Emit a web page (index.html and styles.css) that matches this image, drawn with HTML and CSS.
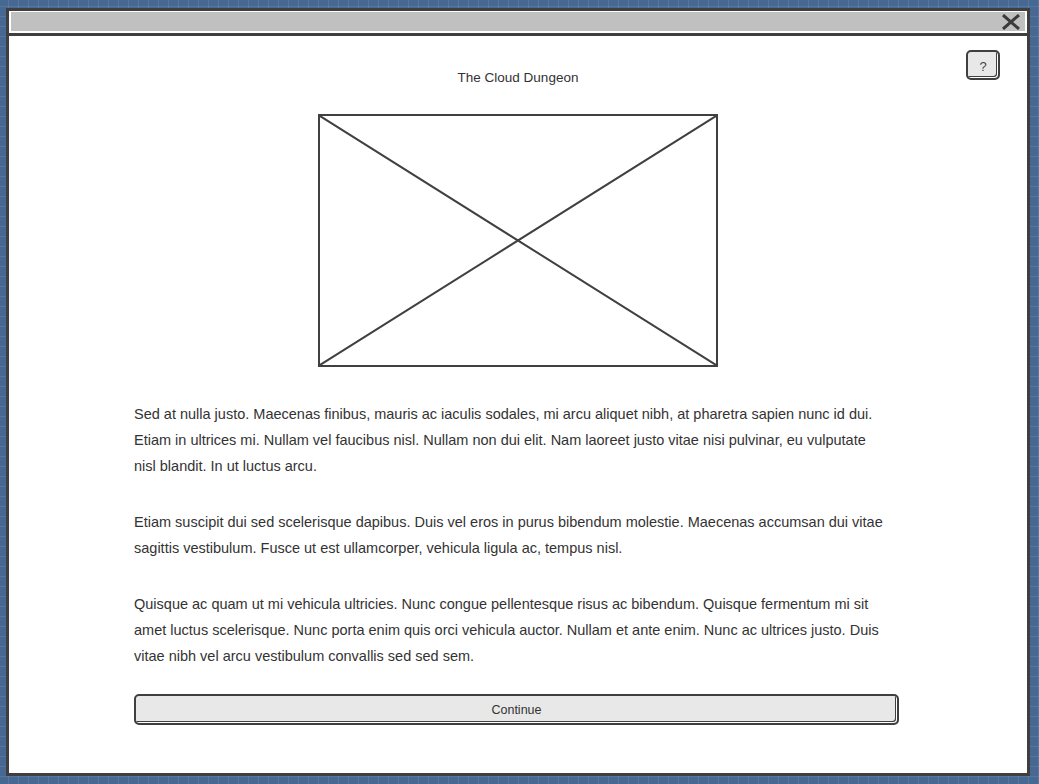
FILE: index.html
```html
<!DOCTYPE html>
<html>
<head>
<meta charset="utf-8">
<link rel="stylesheet" href="styles.css">
</head>
<body>
<div class="window">
  <div class="titlebar">
    <div class="titlebar-fill">
      <svg class="close" width="20" height="16" viewBox="0 0 20 16"><path d="M2 1 L18 15 M18 1 L2 15" stroke="#3a3a3a" stroke-width="3" fill="none"/></svg>
    </div>
  </div>
  <div class="content">
    <button class="help">?</button>
    <h1 class="title">The Cloud Dungeon</h1>
    <div class="placeholder">
      <svg width="396" height="249" viewBox="0 0 396 249" preserveAspectRatio="none"><path d="M0 0 L396 249 M396 0 L0 249" stroke="#404040" stroke-width="2" fill="none"/></svg>
    </div>
    <div class="text">
      <p>Sed at nulla justo. Maecenas finibus, mauris ac iaculis sodales, mi arcu aliquet nibh, at pharetra sapien nunc id dui.<br>Etiam in ultrices mi. Nullam vel faucibus nisl. Nullam non dui elit. Nam laoreet justo vitae nisi pulvinar, eu vulputate<br>nisl blandit. In ut luctus arcu.</p>
      <p>Etiam suscipit dui sed scelerisque dapibus. Duis vel eros in purus bibendum molestie. Maecenas accumsan dui vitae<br>sagittis vestibulum. Fusce ut est ullamcorper, vehicula ligula ac, tempus nisl.</p>
      <p>Quisque ac quam ut mi vehicula ultricies. Nunc congue pellentesque risus ac bibendum. Quisque fermentum mi sit<br>amet luctus scelerisque. Nunc porta enim quis orci vehicula auctor. Nullam et ante enim. Nunc ac ultrices justo. Duis<br>vitae nibh vel arcu vestibulum convallis sed sed sem.</p>
      <button class="continue">Continue</button>
    </div>
  </div>
</div>
</body>
</html>
```
FILE: styles.css
```css
html, body {
  margin: 0;
  padding: 0;
}
body {
  width: 1039px;
  height: 784px;
  overflow: hidden;
  background-color: #476891;
  background-image:
    linear-gradient(to right, rgba(110,140,180,0.4) 1px, transparent 1px),
    linear-gradient(to bottom, rgba(110,140,180,0.4) 1px, transparent 1px);
  background-size: 10px 10px;
  background-position: 8px 6px;
  font-family: "Liberation Sans", Arial, sans-serif;
  color: #333;
}
.window {
  position: relative;
  margin: 8px 0 0 6px;
  width: 1018px;
  height: 762px;
  border: 3px solid #3f3f3f;
  background: #fff;
}
.titlebar {
  padding: 1px 2px 2px 2px;
  border-bottom: 3px solid #3f3f3f;
}
.titlebar-fill {
  height: 19px;
  background: #c0c0c0;
  display: flex;
  justify-content: flex-end;
  align-items: center;
}
.close {
  margin-right: 4px;
  display: block;
}
.content {
  position: relative;
  display: flex;
  flex-direction: column;
  align-items: center;
}
.help {
  position: absolute;
  top: 14px;
  right: 27px;
  width: 34px;
  height: 30px;
  border: 2px solid #3f3f3f;
  border-radius: 5px;
  background: #e8e8e8;
  box-shadow: inset -1px -1px 0 #fff, inset -2px -2px 0 #3f3f3f;
  font-family: "Liberation Sans", Arial, sans-serif;
  font-size: 13px;
  padding-top: 3px;
  color: #444;
}
.title {
  margin: 32px 0 0 0;
  font-size: 13.5px;
  font-weight: normal;
  line-height: 20px;
  color: #333;
}
.placeholder {
  margin-top: 26px;
  width: 396px;
  height: 249px;
  border: 2px solid #404040;
}
.placeholder svg {
  display: block;
}
.text {
  align-self: flex-start;
  margin-left: 125px;
  width: 765px;
  margin-top: 34px;
}
.text p {
  margin: 0 0 30px 0;
  font-size: 14.5px;
  line-height: 26px;
  white-space: nowrap;
  color: #333;
}
.text p:last-of-type {
  margin-bottom: 25px;
}
.continue {
  display: block;
  width: 765px;
  height: 31px;
  border: 2px solid #3f3f3f;
  border-radius: 5px;
  background: #e8e8e8;
  box-shadow: inset -1px -1px 0 #fff, inset -2px -2px 0 #3f3f3f;
  font-family: "Liberation Sans", Arial, sans-serif;
  font-size: 12.5px;
  color: #333;
  padding: 0;
}
```
